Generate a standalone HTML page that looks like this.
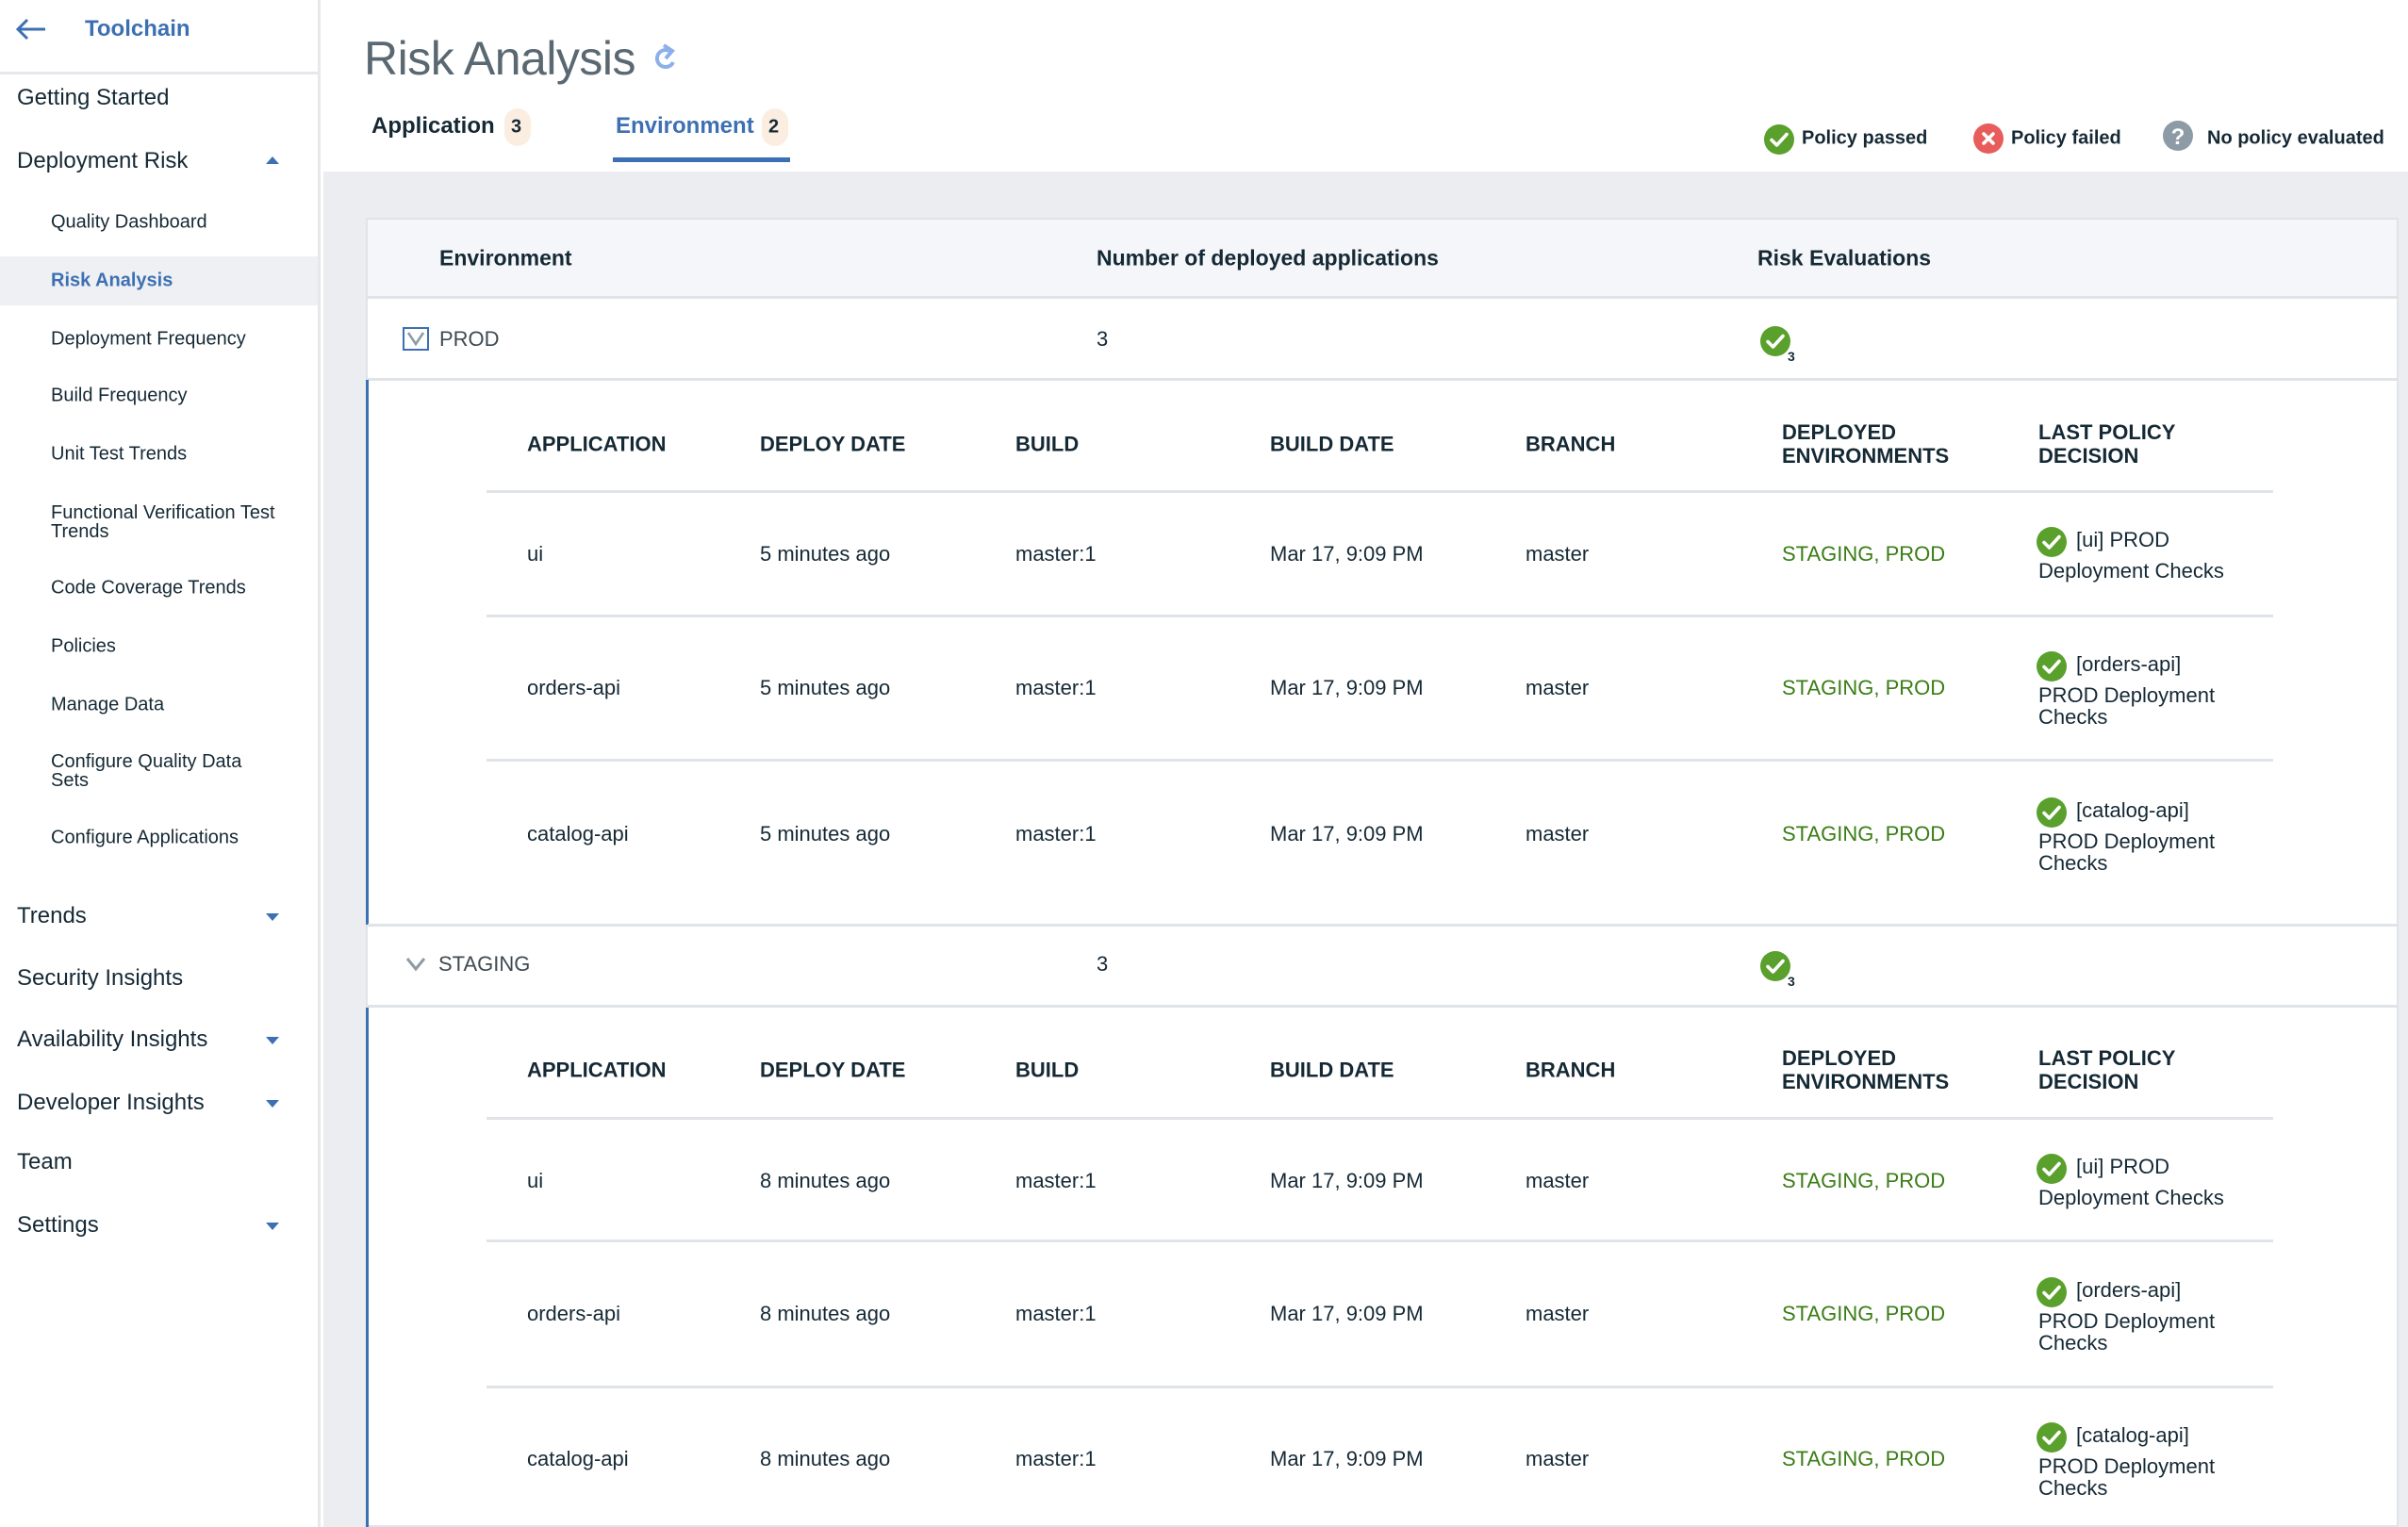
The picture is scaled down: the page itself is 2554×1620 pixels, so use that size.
<!DOCTYPE html>
<html><head><meta charset="utf-8"><style>
*{margin:0;padding:0;box-sizing:border-box}
body{width:2554px;height:1620px;overflow:hidden;background:#fff;font-family:"Liberation Sans",sans-serif;color:#152935;position:relative}
.a{position:absolute;white-space:nowrap;transform:translateY(-50%)}
.side{position:absolute;left:0;top:0;width:340px;height:1620px;background:#fff;border-right:3px solid #e6e8ec}
.l1{font-size:24px;left:18px}
.l2{font-size:20px;left:54px}
.car{position:absolute;left:282px;width:0;height:0;border-left:7px solid transparent;border-right:7px solid transparent}
.dn{border-top:8px solid #3d70b2}
.up{border-bottom:8px solid #3d70b2}
.gray{position:absolute;left:343px;top:182px;width:2211px;height:1438px;background:#ebedf1}
.card{position:absolute;left:388px;top:231px;width:2156px;height:1389px;background:#fff;border:2px solid #e0e3e8}
.h{font-size:23px;font-weight:bold}
.t{font-size:22px}
.cap{font-size:22px;font-weight:bold;line-height:25px}
.g{color:#3a7d16;font-size:22px}
.ln{position:absolute;height:3px;background:#e0e3e8}
.ck{position:absolute;width:34px;height:34px}
</style></head><body>
<svg width="0" height="0" style="position:absolute"><defs>
<symbol id="ok" viewBox="0 0 34 34"><circle cx="17" cy="17" r="16" fill="#5aa02c"/><path d="M9 17.5l5.5 5.5L25 11.5" fill="none" stroke="#fff" stroke-width="3.6" stroke-linecap="round" stroke-linejoin="round"/></symbol>
</defs></svg>

<div class="side">
  <svg style="position:absolute;left:16px;top:18px" width="34" height="26" viewBox="0 0 34 26"><path d="M32 13H3M13 3L3 13l10 10" fill="none" stroke="#3d70b2" stroke-width="3"/></svg>
  <div class="a" style="left:90px;top:31px;font-size:24px;font-weight:bold;color:#3d70b2">Toolchain</div>
  <div style="position:absolute;left:0;top:76px;width:340px;height:3px;background:#e6e8ec"></div>
  <div class="a l1" style="top:104px">Getting Started</div>
  <div class="a l1" style="top:171px">Deployment Risk</div>
  <div class="car up" style="top:166px"></div>
  <div class="a l2" style="top:236px">Quality Dashboard</div>
  <div style="position:absolute;left:0;top:272px;width:337px;height:52px;background:#eef0f4"></div>
  <div class="a l2" style="top:298px;color:#3d70b2;font-weight:bold">Risk Analysis</div>
  <div class="a l2" style="top:360px">Deployment Frequency</div>
  <div class="a l2" style="top:420px">Build Frequency</div>
  <div class="a l2" style="top:482px">Unit Test Trends</div>
  <div class="a l2" style="top:554px;line-height:20px">Functional Verification Test<br>Trends</div>
  <div class="a l2" style="top:624px">Code Coverage Trends</div>
  <div class="a l2" style="top:686px">Policies</div>
  <div class="a l2" style="top:748px">Manage Data</div>
  <div class="a l2" style="top:818px;line-height:20px">Configure Quality Data<br>Sets</div>
  <div class="a l2" style="top:889px">Configure Applications</div>
  <div class="a l1" style="top:972px">Trends</div><div class="car dn" style="top:969px"></div>
  <div class="a l1" style="top:1038px">Security Insights</div>
  <div class="a l1" style="top:1103px">Availability Insights</div><div class="car dn" style="top:1100px"></div>
  <div class="a l1" style="top:1170px">Developer Insights</div><div class="car dn" style="top:1167px"></div>
  <div class="a l1" style="top:1233px">Team</div>
  <div class="a l1" style="top:1300px">Settings</div><div class="car dn" style="top:1297px"></div>
</div>

<div class="a" style="left:386px;top:62px;font-size:50px;color:#5a6872;letter-spacing:-0.5px">Risk Analysis</div>
<svg style="position:absolute;left:690px;top:44px" width="32" height="38" viewBox="0 0 32 38"><path d="M24 22a9 9 0 1 1-4-12" fill="none" stroke="#8cb0ea" stroke-width="4"/><path d="M14 4l9 6-7 8" fill="none" stroke="#8cb0ea" stroke-width="4"/></svg>

<div class="a" style="left:394px;top:134px;font-size:24px;font-weight:bold">Application</div>
<div style="position:absolute;left:535px;top:115px;width:28px;height:40px;border-radius:14px;background:#fbeee0"></div>
<div class="a" style="left:542px;top:135px;font-size:20px;font-weight:bold">3</div>
<div class="a" style="left:653px;top:134px;font-size:24px;font-weight:bold;color:#3d70b2">Environment</div>
<div style="position:absolute;left:808px;top:115px;width:28px;height:40px;border-radius:14px;background:#fbeee0"></div>
<div class="a" style="left:815px;top:135px;font-size:20px;font-weight:bold">2</div>
<div style="position:absolute;left:650px;top:167px;width:188px;height:5px;background:#3d70b2"></div>

<svg class="ck" style="left:1870px;top:131px"><use href="#ok"/></svg>
<div class="a" style="left:1911px;top:147px;font-size:20px;font-weight:bold">Policy passed</div>
<svg style="position:absolute;left:2092px;top:130px" width="34" height="34" viewBox="0 0 34 34"><circle cx="17" cy="17" r="16" fill="#e85c5c"/><path d="M12 12l10 10M22 12l-10 10" stroke="#fff" stroke-width="3.6" stroke-linecap="round"/></svg>
<div class="a" style="left:2133px;top:147px;font-size:20px;font-weight:bold">Policy failed</div>
<svg style="position:absolute;left:2293px;top:127px" width="34" height="34" viewBox="0 0 34 34"><circle cx="17" cy="17" r="16" fill="#8c9ba5"/><text x="17" y="26" text-anchor="middle" font-family="Liberation Sans" font-size="24" font-weight="bold" fill="#fff">?</text></svg>
<div class="a" style="left:2341px;top:147px;font-size:20px;font-weight:bold">No policy evaluated</div>

<div class="gray"></div>
<div class="card">
  <div style="position:absolute;left:0;top:0;width:2152px;height:84px;background:#f4f6f9;border-bottom:3px solid #e0e3e8"></div>
</div>
<div class="a h" style="left:466px;top:274px">Environment</div>
<div class="a h" style="left:1163px;top:274px">Number of deployed applications</div>
<div class="a h" style="left:1864px;top:274px">Risk Evaluations</div>

<!-- PROD row -->
<svg style="position:absolute;left:427px;top:347px" width="28" height="25" viewBox="0 0 28 25"><rect x="1" y="1" width="26" height="23" fill="none" stroke="#3d70b2" stroke-width="2"/><path d="M6 6l8 12 8-12" fill="none" stroke="#8c9ba5" stroke-width="2.5"/></svg>
<div class="a t" style="left:466px;top:360px;color:#3f4a52">PROD</div>
<div class="a t" style="left:1163px;top:360px">3</div>
<svg class="ck" style="left:1866px;top:345px"><use href="#ok"/></svg>
<div class="a" style="left:1896px;top:378px;font-size:14px;font-weight:bold">3</div>
<div class="ln" style="left:390px;top:401px;width:2154px"></div>
<div style="position:absolute;left:388px;top:403px;width:3px;height:578px;background:#3d70b2"></div>

<!-- PROD detail -->
<div class="a cap" style="left:559px;top:471px">APPLICATION</div>
<div class="a cap" style="left:806px;top:471px">DEPLOY DATE</div>
<div class="a cap" style="left:1077px;top:471px">BUILD</div>
<div class="a cap" style="left:1347px;top:471px">BUILD DATE</div>
<div class="a cap" style="left:1618px;top:471px">BRANCH</div>
<div class="a cap" style="left:1890px;top:471px">DEPLOYED<br>ENVIRONMENTS</div>
<div class="a cap" style="left:2162px;top:471px">LAST POLICY<br>DECISION</div>
<div class="ln" style="left:516px;top:520px;width:1895px"></div>
<div class="ln" style="left:516px;top:652px;width:1895px"></div>
<div class="ln" style="left:516px;top:805px;width:1895px"></div>

<div class="a t" style="left:559px;top:588px">ui</div>
<div class="a t" style="left:806px;top:588px">5 minutes ago</div>
<div class="a t" style="left:1077px;top:588px">master:1</div>
<div class="a t" style="left:1347px;top:588px">Mar 17, 9:09 PM</div>
<div class="a t" style="left:1618px;top:588px">master</div>
<div class="a g" style="left:1890px;top:588px">STAGING, PROD</div>
<svg class="ck" style="left:2159px;top:558px"><use href="#ok"/></svg>
<div class="a t" style="left:2202px;top:573px">[ui] PROD</div>
<div class="a t" style="left:2162px;top:606px">Deployment Checks</div>

<div class="a t" style="left:559px;top:730px">orders-api</div>
<div class="a t" style="left:806px;top:730px">5 minutes ago</div>
<div class="a t" style="left:1077px;top:730px">master:1</div>
<div class="a t" style="left:1347px;top:730px">Mar 17, 9:09 PM</div>
<div class="a t" style="left:1618px;top:730px">master</div>
<div class="a g" style="left:1890px;top:730px">STAGING, PROD</div>
<svg class="ck" style="left:2159px;top:690px"><use href="#ok"/></svg>
<div class="a t" style="left:2202px;top:705px">[orders-api]</div>
<div class="a t" style="left:2162px;top:738px">PROD Deployment</div>
<div class="a t" style="left:2162px;top:761px">Checks</div>

<div class="a t" style="left:559px;top:885px">catalog-api</div>
<div class="a t" style="left:806px;top:885px">5 minutes ago</div>
<div class="a t" style="left:1077px;top:885px">master:1</div>
<div class="a t" style="left:1347px;top:885px">Mar 17, 9:09 PM</div>
<div class="a t" style="left:1618px;top:885px">master</div>
<div class="a g" style="left:1890px;top:885px">STAGING, PROD</div>
<svg class="ck" style="left:2159px;top:845px"><use href="#ok"/></svg>
<div class="a t" style="left:2202px;top:860px">[catalog-api]</div>
<div class="a t" style="left:2162px;top:893px">PROD Deployment</div>
<div class="a t" style="left:2162px;top:916px">Checks</div>

<!-- STAGING row -->
<div class="ln" style="left:390px;top:980px;width:2154px"></div>
<svg style="position:absolute;left:430px;top:1015px" width="22" height="16" viewBox="0 0 22 16"><path d="M2 2l9 11 9-11" fill="none" stroke="#8c9ba5" stroke-width="3"/></svg>
<div class="a t" style="left:465px;top:1023px;color:#3f4a52">STAGING</div>
<div class="a t" style="left:1163px;top:1023px">3</div>
<svg class="ck" style="left:1866px;top:1008px"><use href="#ok"/></svg>
<div class="a" style="left:1896px;top:1041px;font-size:14px;font-weight:bold">3</div>
<div class="ln" style="left:390px;top:1066px;width:2154px"></div>
<div style="position:absolute;left:388px;top:1069px;width:3px;height:551px;background:#3d70b2"></div>

<div class="a cap" style="left:559px;top:1135px">APPLICATION</div>
<div class="a cap" style="left:806px;top:1135px">DEPLOY DATE</div>
<div class="a cap" style="left:1077px;top:1135px">BUILD</div>
<div class="a cap" style="left:1347px;top:1135px">BUILD DATE</div>
<div class="a cap" style="left:1618px;top:1135px">BRANCH</div>
<div class="a cap" style="left:1890px;top:1135px">DEPLOYED<br>ENVIRONMENTS</div>
<div class="a cap" style="left:2162px;top:1135px">LAST POLICY<br>DECISION</div>
<div class="ln" style="left:516px;top:1185px;width:1895px"></div>
<div class="ln" style="left:516px;top:1315px;width:1895px"></div>
<div class="ln" style="left:516px;top:1470px;width:1895px"></div>

<div class="a t" style="left:559px;top:1253px">ui</div>
<div class="a t" style="left:806px;top:1253px">8 minutes ago</div>
<div class="a t" style="left:1077px;top:1253px">master:1</div>
<div class="a t" style="left:1347px;top:1253px">Mar 17, 9:09 PM</div>
<div class="a t" style="left:1618px;top:1253px">master</div>
<div class="a g" style="left:1890px;top:1253px">STAGING, PROD</div>
<svg class="ck" style="left:2159px;top:1223px"><use href="#ok"/></svg>
<div class="a t" style="left:2202px;top:1238px">[ui] PROD</div>
<div class="a t" style="left:2162px;top:1271px">Deployment Checks</div>

<div class="a t" style="left:559px;top:1394px">orders-api</div>
<div class="a t" style="left:806px;top:1394px">8 minutes ago</div>
<div class="a t" style="left:1077px;top:1394px">master:1</div>
<div class="a t" style="left:1347px;top:1394px">Mar 17, 9:09 PM</div>
<div class="a t" style="left:1618px;top:1394px">master</div>
<div class="a g" style="left:1890px;top:1394px">STAGING, PROD</div>
<svg class="ck" style="left:2159px;top:1354px"><use href="#ok"/></svg>
<div class="a t" style="left:2202px;top:1369px">[orders-api]</div>
<div class="a t" style="left:2162px;top:1402px">PROD Deployment</div>
<div class="a t" style="left:2162px;top:1425px">Checks</div>

<div class="a t" style="left:559px;top:1548px">catalog-api</div>
<div class="a t" style="left:806px;top:1548px">8 minutes ago</div>
<div class="a t" style="left:1077px;top:1548px">master:1</div>
<div class="a t" style="left:1347px;top:1548px">Mar 17, 9:09 PM</div>
<div class="a t" style="left:1618px;top:1548px">master</div>
<div class="a g" style="left:1890px;top:1548px">STAGING, PROD</div>
<svg class="ck" style="left:2159px;top:1508px"><use href="#ok"/></svg>
<div class="a t" style="left:2202px;top:1523px">[catalog-api]</div>
<div class="a t" style="left:2162px;top:1556px">PROD Deployment</div>
<div class="a t" style="left:2162px;top:1579px">Checks</div>
</body></html>
